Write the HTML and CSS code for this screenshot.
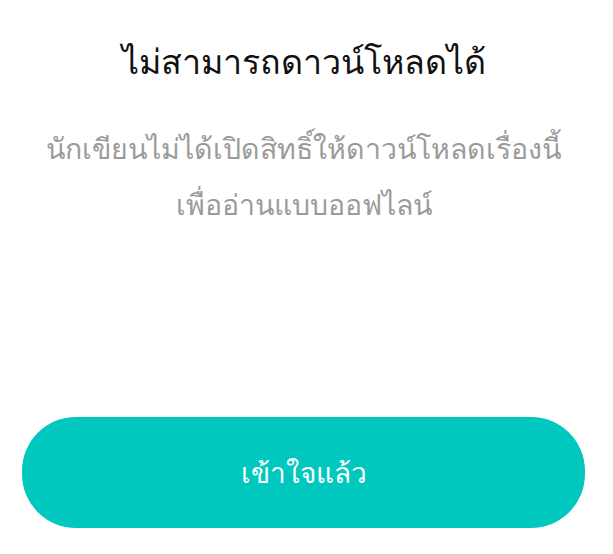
FILE: index.html
```html
<!DOCTYPE html>
<html lang="th">
<head>
  <meta charset="UTF-8">
  <title>ไม่สามารถดาวน์โหลดได้</title>
  <link rel="stylesheet" href="styles.css">
</head>
<body>

  <div class="dialog">
    <h2 class="title">ไม่สามารถดาวน์โหลดได้</h2>
    <p class="message">นักเขียนไม่ได้เปิดสิทธิ์ให้ดาวน์โหลดเรื่องนี้<br>เพื่ออ่านแบบออฟไลน์</p>
    <button type="button" class="ok-button">เข้าใจแล้ว</button>
  </div>

</body>
</html>
```

FILE: styles.css
```css
body {
  margin: 0;
  background-color: white;
  font-family: "Noto Sans", "DejaVu Sans", sans-serif;
}

.dialog {
  height: 554px;
  display: flex;
  flex-direction: column;
  align-items: center;
  padding: 0 28px 26px 22px;
  box-sizing: border-box;
}

.title {
  margin: 36px 0 0;
  font-size: 34px;
  font-weight: 500;
  line-height: 50px;
  color: #111;
}

.message {
  margin: 34px 0 0;
  font-size: 28.5px;
  line-height: 56px;
  color: #9b9b9b;
  text-align: center;
}

.ok-button {
  margin-top: auto;
  width: 100%;
  height: 111px;
  background-color: #00c8be;
  color: white;
  border: none;
  border-radius: 54px;
  font-family: inherit;
  font-size: 28px;
  cursor: pointer;
}
```
